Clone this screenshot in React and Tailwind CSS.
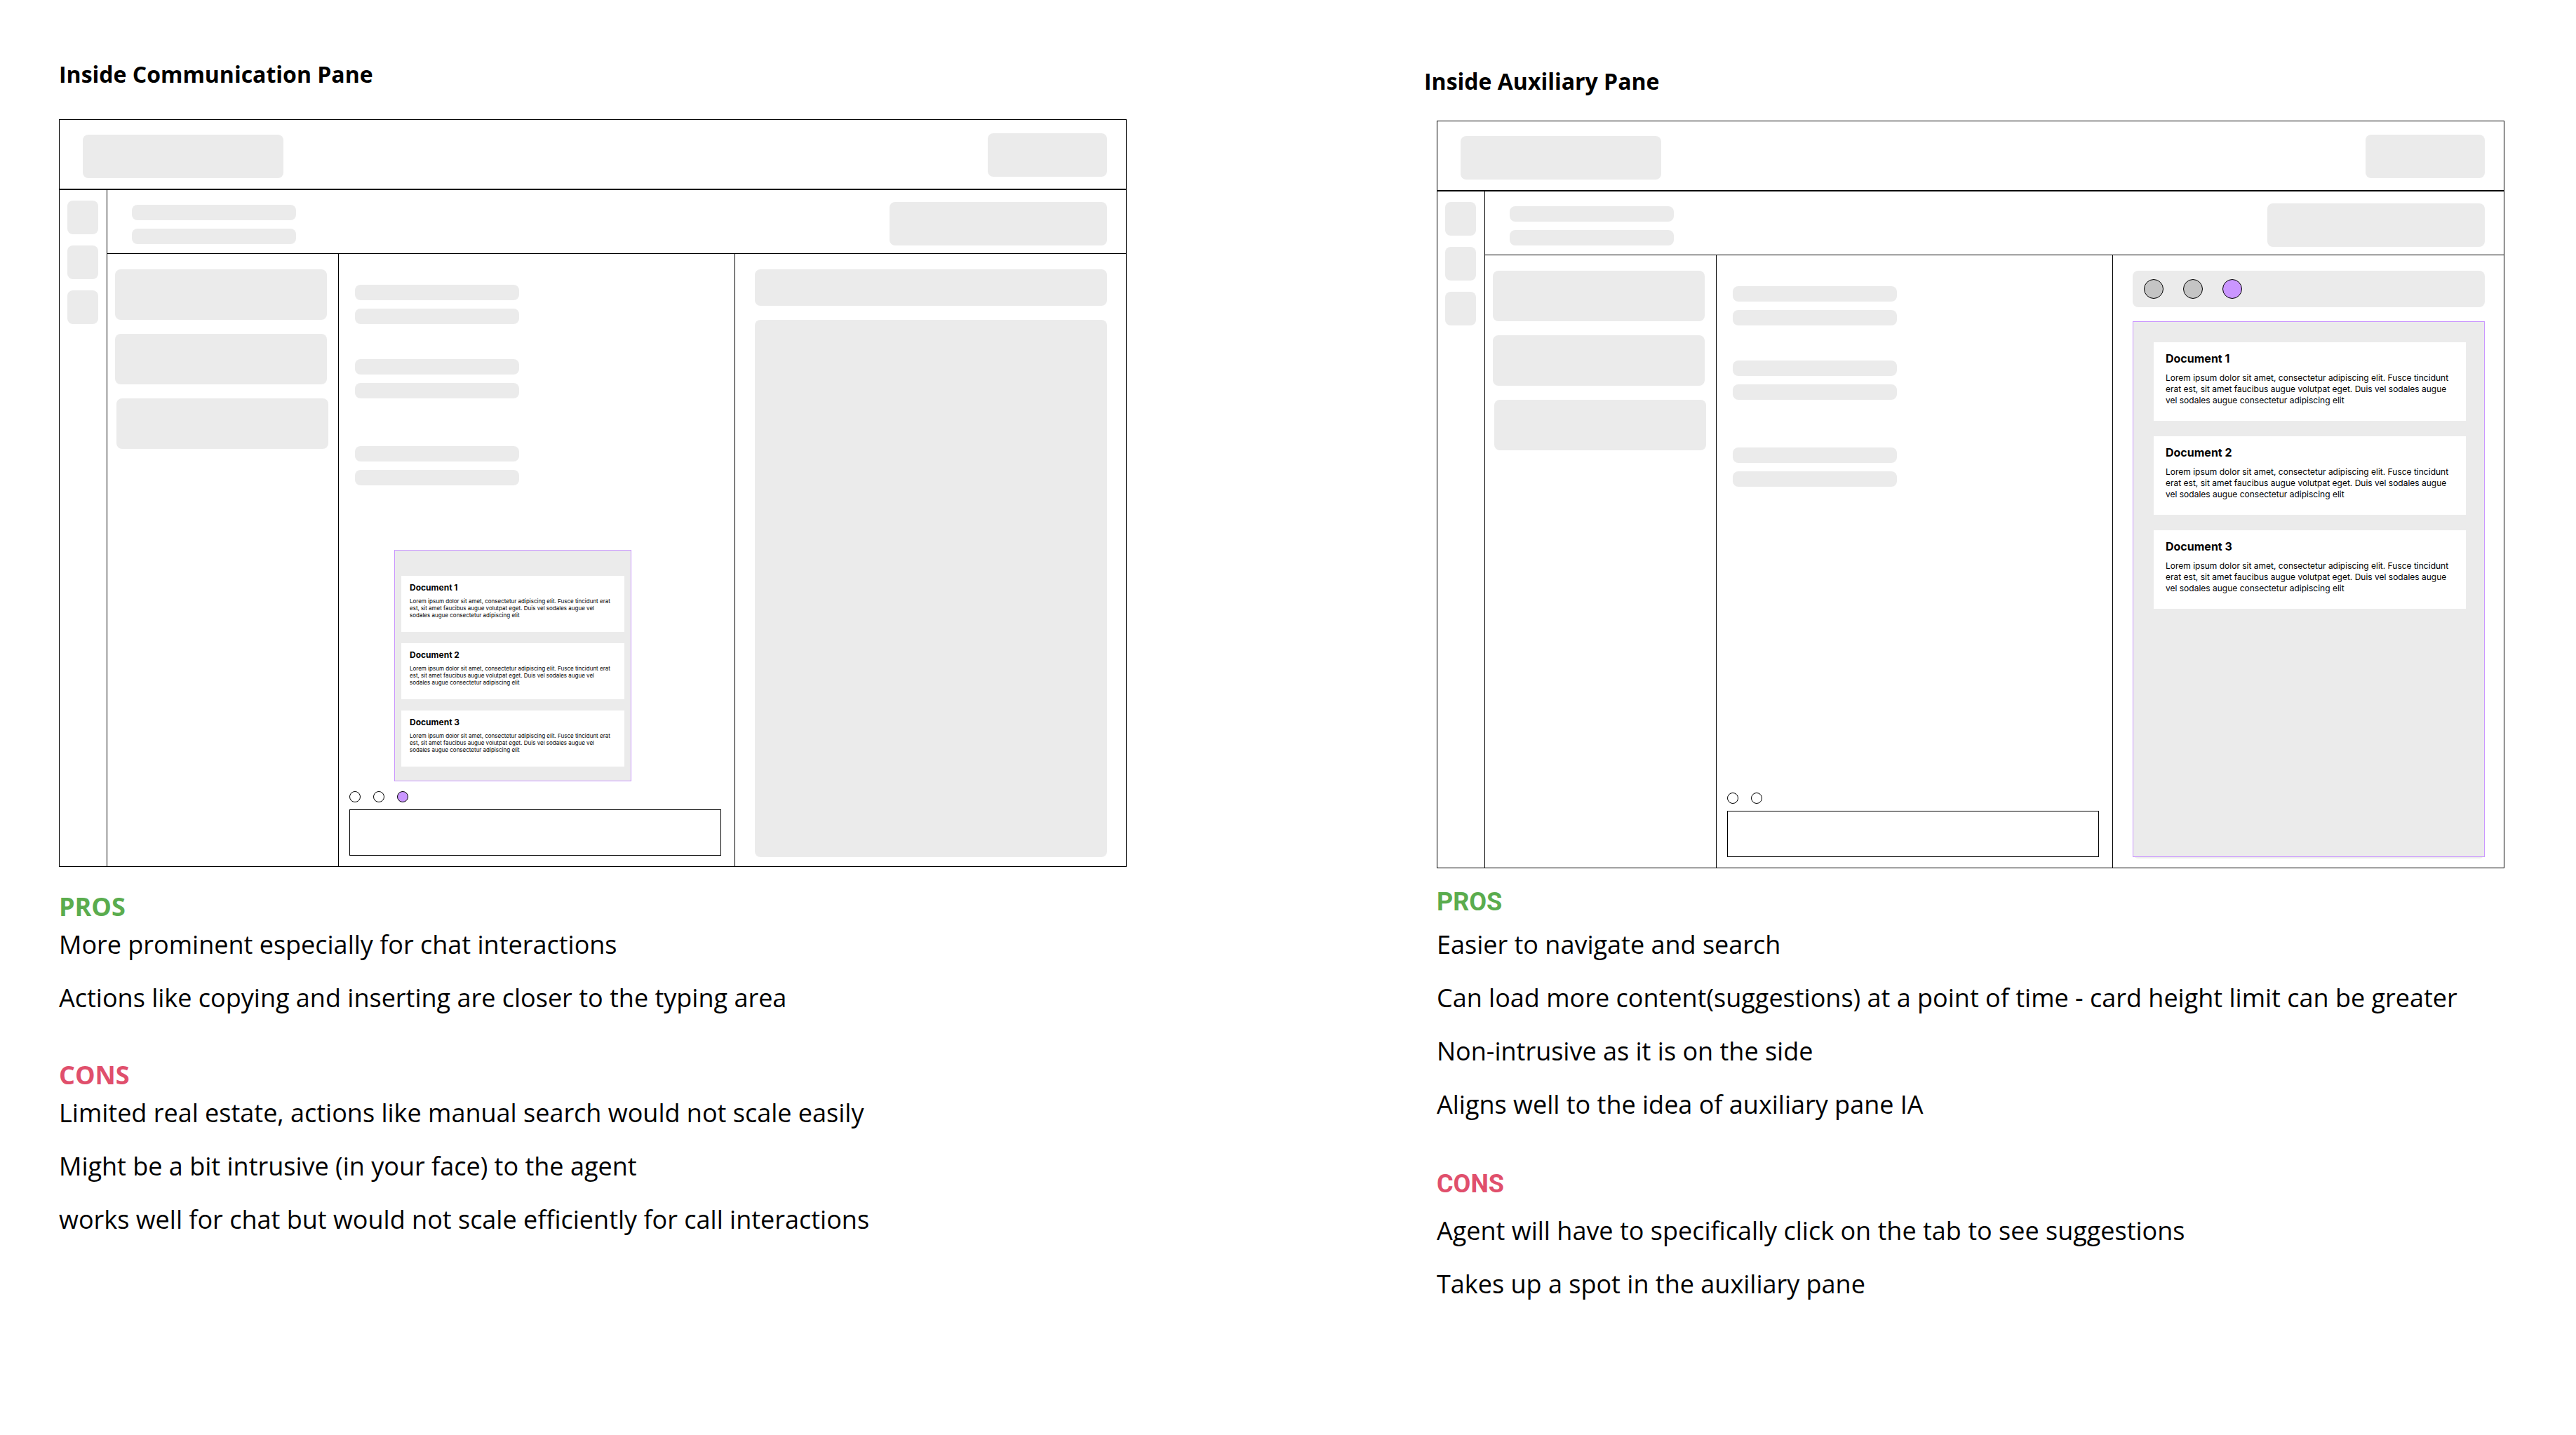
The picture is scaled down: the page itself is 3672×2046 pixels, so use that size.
const LOREM =
  "Lorem ipsum dolor sit amet, consectetur adipiscing elit. Fusce tincidunt erat est, sit amet faucibus augue volutpat eget. Duis vel sodales augue vel sodales augue consectetur adipiscing elit";
const DOCUMENTS = ["Document 1", "Document 2", "Document 3"];

function Block({ className = "" }) {
  return <div className={`rounded-lg bg-[#ebebeb] ${className}`} />;
}

function BarPair({ className = "" }) {
  return (
    <div className={`flex w-[234px] flex-col gap-3 ${className}`}>
      <Block className="h-[22px]" />
      <Block className="h-[22px]" />
    </div>
  );
}

function Dot({ label, className }) {
  return <button type="button" aria-label={label} className={`rounded-full border border-black ${className}`} />;
}

function ChatSuggestions() {
  return (
    <section className="mb-[14px] ml-16 flex w-[338px] flex-col gap-4 border border-[#ca96ff] bg-[#ebebeb] px-[9px] pt-9 pb-5">
      {DOCUMENTS.map((title) => (
        <article key={title} className="h-20 bg-white px-3 pt-[9px]">
          <h3 className="text-[12px] leading-4 font-bold">{title}</h3>
          <p className="mt-[6px] text-[8px] leading-[10px]">{LOREM}</p>
        </article>
      ))}
    </section>
  );
}

function AuxiliarySuggestions() {
  return (
    <div className="flex grow flex-col rounded-lg bg-[#ebebeb] pb-[2px]">
      <section className="flex grow flex-col gap-[22px] border border-[#ca96ff] bg-[#ebebeb] pt-[29px] pr-[26px] pl-[29px]">
        {DOCUMENTS.map((title) => (
          <article key={title} className="h-28 bg-white pt-[11px] pr-5 pl-[17px]">
            <h3 className="text-[16px] leading-6 font-bold">{title}</h3>
            <p className="mt-2 text-[12px] leading-4">{LOREM}</p>
          </article>
        ))}
      </section>
    </div>
  );
}

function Wireframe({ variant }) {
  const inChat = variant === "chat";
  return (
    <div className="flex h-[1066px] flex-col border border-black font-[Inter,sans-serif]">
      <header className="flex h-[100px] shrink-0 items-start justify-between border-b-2 border-black pr-[27px] pl-[33px]">
        <Block className="mt-[21px] h-[62px] w-[286px]" />
        <Block className="mt-[19px] h-[62px] w-[170px]" />
      </header>
      <div className="flex min-h-0 grow">
        <nav className="flex w-[67px] shrink-0 flex-col gap-4 pt-[15px] pl-[11px]">
          <Block className="h-12 w-11" />
          <Block className="h-12 w-11" />
          <Block className="h-12 w-11" />
        </nav>
        <div className="flex min-w-0 grow flex-col border-l border-black">
          <div className="flex h-[91px] shrink-0 items-start justify-between border-b border-black pr-[27px] pl-[35px]">
            <BarPair className="mt-[21px]" />
            <Block className="mt-[17px] h-[62px] w-[310px]" />
          </div>
          <div className="flex min-h-0 grow">
            <aside className="flex w-[329px] shrink-0 flex-col gap-5 pt-[22px] pl-[11px]">
              <Block className="h-[72px] w-[302px]" />
              <Block className="h-[72px] w-[302px]" />
              <Block className="ml-[2px] h-[72px] w-[302px]" />
            </aside>
            <main className="flex min-w-0 grow flex-col border-x border-black pr-[19px] pb-[15px] pl-[15px]">
              <BarPair className="mt-11 ml-2" />
              <BarPair className="mt-[50px] ml-2" />
              <BarPair className="mt-[68px] ml-2" />
              <div className="mt-auto">
                {inChat && <ChatSuggestions />}
                <div className="flex gap-[18px]">
                  <Dot label="Chat action 1" className="size-4" />
                  <Dot label="Chat action 2" className="size-4" />
                  {inChat && <Dot label="Suggestions" className="size-4 bg-[#ca96ff]" />}
                </div>
                <input
                  aria-label="Message"
                  className="mt-[10px] block h-[66px] w-full border border-black px-4 text-[16px]"
                />
              </div>
            </main>
            <aside className="flex w-[557px] shrink-0 flex-col gap-5 pt-[22px] pr-[27px] pb-[13px] pl-7">
              {inChat ? (
                <>
                  <Block className="h-[52px]" />
                  <Block className="grow" />
                </>
              ) : (
                <>
                  <div className="flex h-[52px] items-center gap-7 rounded-lg bg-[#ebebeb] px-4">
                    <Dot label="Tab 1" className="size-7 bg-[#c4c4c4]" />
                    <Dot label="Tab 2" className="size-7 bg-[#c4c4c4]" />
                    <Dot label="Suggestions" className="size-7 bg-[#ca96ff]" />
                  </div>
                  <AuxiliarySuggestions />
                </>
              )}
            </aside>
          </div>
        </div>
      </div>
    </div>
  );
}

function Points({ items }) {
  return (
    <ul className="flex flex-col gap-7 text-[36px] leading-[48px]">
      {items.map((item) => (
        <li key={item}>{item}</li>
      ))}
    </ul>
  );
}

export default function App() {
  return (
    <div className="grid min-h-screen grid-cols-[1522fr_1522fr] gap-x-[442px] bg-white pr-[102px] pl-[84px] font-['Open_Sans',sans-serif] text-black">
      <section className="flex flex-col pt-[82px]">
        <h1 className="mb-10 text-[32px] leading-[48px] font-bold">Inside Communication Pane</h1>
        <Wireframe variant="chat" />
        <h2 className="mt-[33px] text-[36px] leading-[48px] font-bold text-[#5aac4e]">PROS</h2>
        <div className="mt-[6px]">
          <Points
            items={[
              "More prominent especially for chat interactions",
              "Actions like copying and inserting are closer to the typing area",
            ]}
          />
        </div>
        <h2 className="mt-[62px] text-[36px] leading-[48px] font-bold text-[#e04f6c]">CONS</h2>
        <div className="mt-[6px]">
          <Points
            items={[
              "Limited real estate, actions like manual search would not scale easily",
              "Might be a bit intrusive (in your face) to the agent",
              "works well for chat but would not scale efficiently for call interactions",
            ]}
          />
        </div>
      </section>
      <section className="flex flex-col pt-[92px]">
        <h1 className="mb-8 -ml-[18px] text-[32px] leading-[48px] font-bold">Inside Auxiliary Pane</h1>
        <Wireframe variant="auxiliary" />
        <h2 className="mt-6 font-[Roboto,sans-serif] text-[36px] leading-[48px] font-bold text-[#5aac4e]">PROS</h2>
        <div className="mt-[13px]">
          <Points
            items={[
              "Easier to navigate and search",
              "Can load more content(suggestions) at a point of time - card height limit can be greater",
              "Non-intrusive as it is on the side",
              "Aligns well to the idea of auxiliary pane IA",
            ]}
          />
        </div>
        <h2 className="mt-[65px] font-[Roboto,sans-serif] text-[36px] leading-[48px] font-bold text-[#e04f6c]">CONS</h2>
        <div className="mt-[19px]">
          <Points
            items={["Agent will have to specifically click on the tab to see suggestions", "Takes up a spot in the auxiliary pane"]}
          />
        </div>
      </section>
    </div>
  );
}
